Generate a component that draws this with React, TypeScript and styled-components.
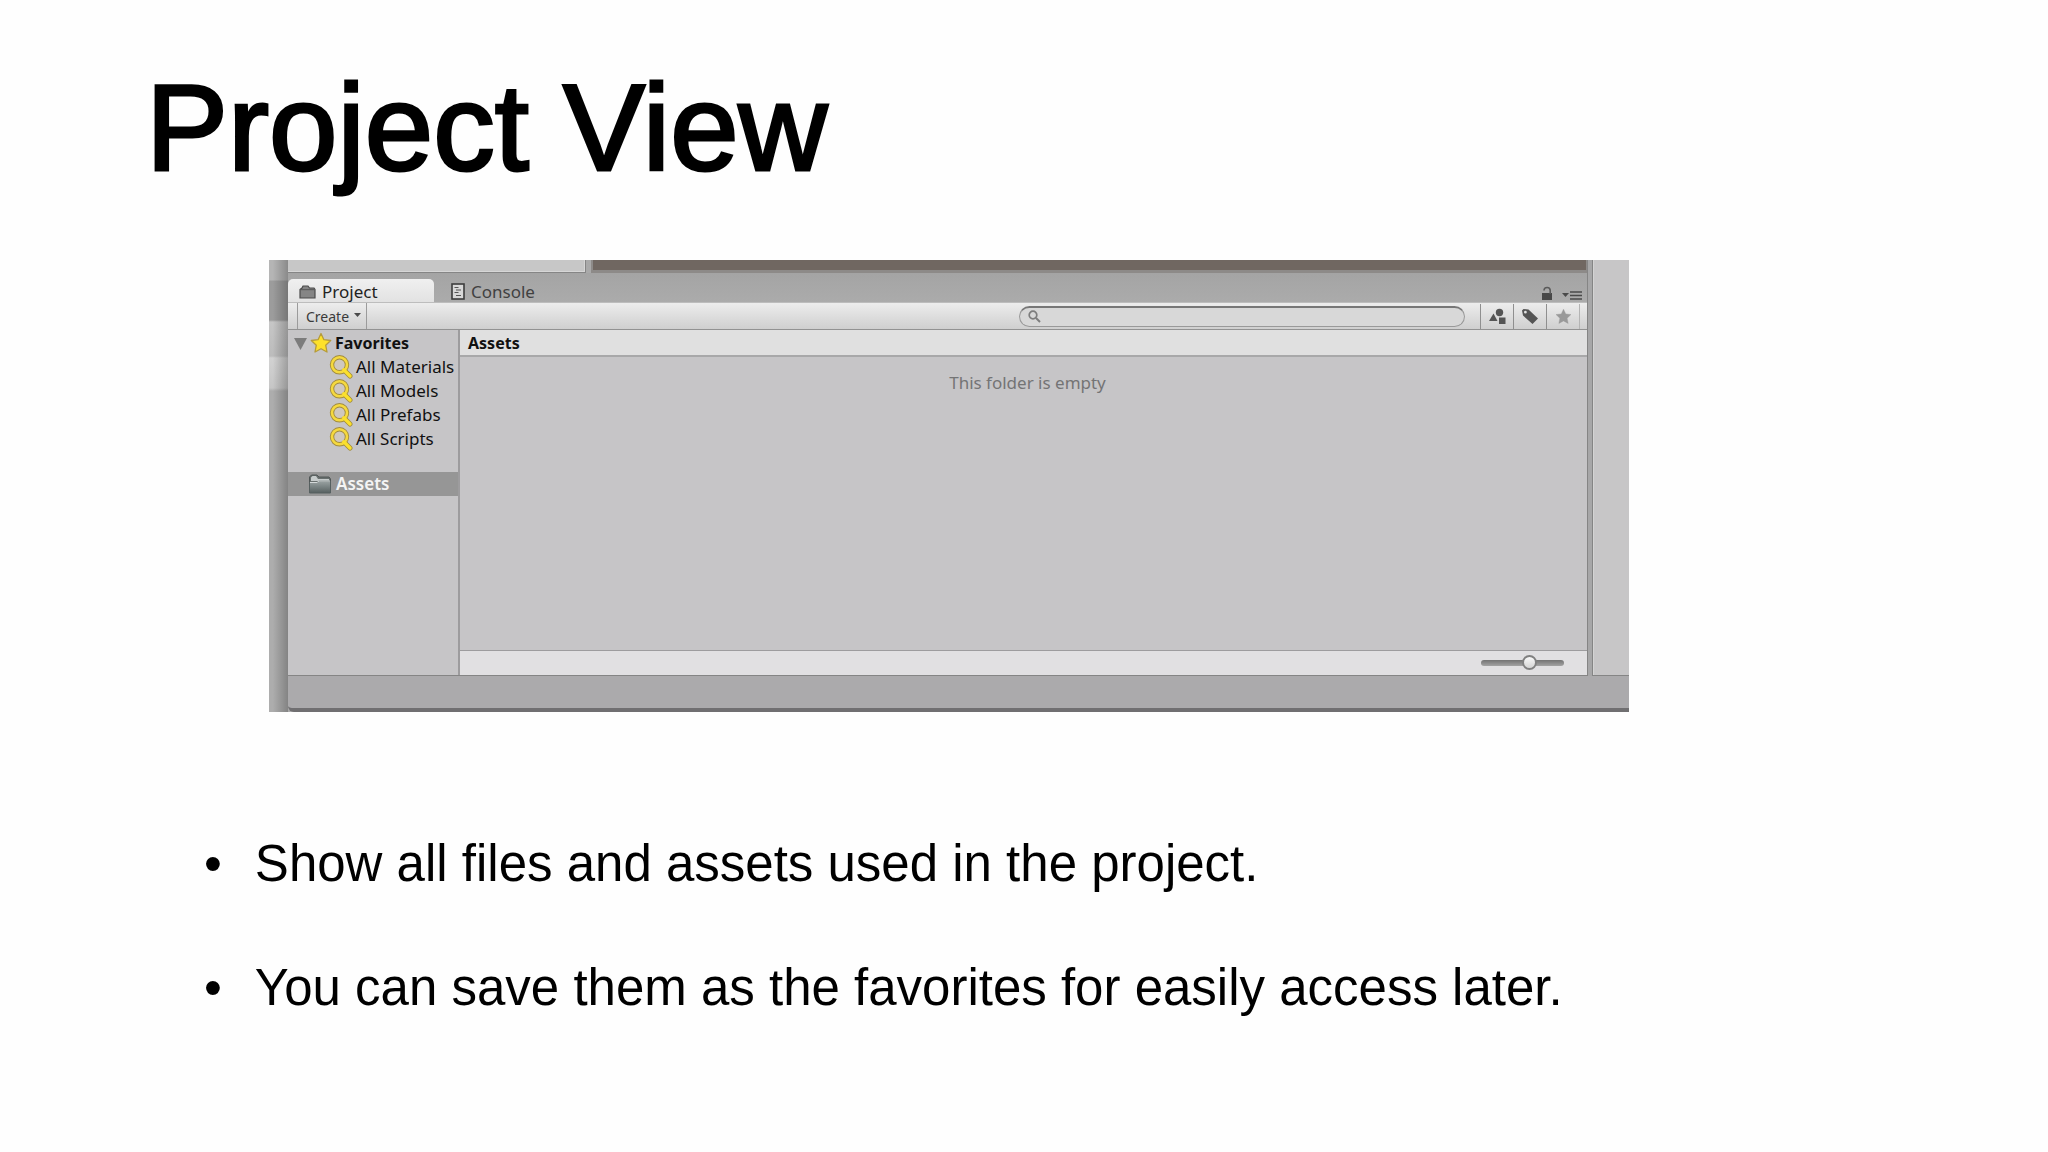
import React, { useState } from "react";
import styled, { createGlobalStyle } from "styled-components";

const GlobalStyle = createGlobalStyle`
  *, *::before, *::after { box-sizing: border-box; }
  body { margin: 0; background: #fefefe; color: #000; }
  button, input { font: inherit; color: inherit; }
`;

const sans = `"Helvetica Neue", "Liberation Sans", Arial, sans-serif`;
const ui = `"Lucida Grande", "Noto Sans", sans-serif`;

const Slide = styled.main`
  min-height: 100vh;
  padding: 60px 0 0;
  font-family: ${sans};
`;

const Title = styled.h1`
  margin: 0 146px;
  font-size: 123px;
  line-height: 136px;
  font-weight: 400;
  -webkit-text-stroke: 3px #000;
`;

const Frame = styled.section`
  display: flex;
  margin: 64px 419px 0 269px;
  background: #a9a9a9;
  font-family: ${ui};
  font-size: 17px;
  line-height: 24px;
`;

const Backdrop = styled.div`
  width: 19px;
  flex: none;
  background:
    linear-gradient(90deg, transparent 20%, rgba(0, 0, 0, 0.24)),
    linear-gradient(#b5b5b5 20px, #9c9c9c 21px, #9c9c9c 60px, #c6c6c6 62px, #bcbcbc 96px, #d2d2d2 98px, #c6c6c6 128px, #adadad 131px);
`;

const Window = styled.div`
  flex: 1;
  min-width: 0;
  display: flex;
  flex-direction: column;
`;

const WorkArea = styled.div`
  display: flex;
`;

const Dock = styled.div`
  flex: 1;
  min-width: 0;
  border-right: 1px solid #858585;
`;

const Gutter = styled.div`
  width: 4px;
  background: #a7a7a8;
`;

const SidePane = styled.div`
  width: 37px;
  background: #c7c6c7;
  border-left: 1px solid #858585;
  border-bottom: 1px solid #858585;
  box-shadow: inset 1px 0 #d4d4d4;
`;

const UpperPanes = styled.div`
  display: flex;
  gap: 5px;
  height: 13px;
`;

const HierarchyEdge = styled.div`
  width: 298px;
  background: #c7c7c7;
  border: solid #858585;
  border-width: 0 1px 1px 0;
  box-shadow: inset -1px -1px #d6d6d6;
`;

const SceneEdge = styled.div`
  flex: 1;
  background: #706761;
  border: solid #8d8a88;
  border-width: 0 1px 3px 2px;
`;

const TabBar = styled.div`
  display: flex;
  align-items: flex-end;
  height: 29px;
  background: linear-gradient(#a4a4a4, #ababab);
`;

const Tab = styled.button<{ $active?: boolean }>`
  display: flex;
  align-items: center;
  gap: 6px;
  height: 23px;
  width: ${(p) => (p.$active ? "146px" : "auto")};
  margin: 0 ${(p) => (p.$active ? "17px" : "0")} 0 0;
  padding: 2px 0 0 ${(p) => (p.$active ? "11px" : "0")};
  border: 0;
  border-radius: 5px 5px 0 0;
  background: ${(p) => (p.$active ? "linear-gradient(#f0f0f0, #e2e2e2)" : "none")};
  color: ${(p) => (p.$active ? "#222" : "#414141")};
`;

const TabTools = styled.div`
  display: flex;
  gap: 8px;
  margin-left: auto;
  padding: 0 4px 1px 0;
`;

const IconButton = styled.button`
  display: flex;
  padding: 0;
  border: 0;
  background: none;
`;

const Toolbar = styled.div`
  display: flex;
  align-items: center;
  height: 28px;
  padding: 0 7px 0 9px;
  background: linear-gradient(#ededed, #cfcfcf);
  border-top: 1px solid #bdbdbd;
  border-bottom: 1px solid #929292;
`;

const CreateButton = styled.button`
  display: flex;
  align-items: center;
  gap: 5px;
  height: 26px;
  padding: 1px 5px 0 8px;
  border: solid #9b9b9b;
  border-width: 0 1px;
  background: none;
  font-size: 14px;
  color: #3a3a3a;
`;

const SearchBox = styled.label`
  display: flex;
  align-items: center;
  gap: 6px;
  width: 446px;
  height: 21px;
  margin: 0 15px 0 auto;
  padding: 0 10px 0 8px;
  border: 1px solid #999;
  border-top: 2px solid #777;
  border-radius: 11px;
  background: #d8d8d8;
`;

const SearchInput = styled.input`
  flex: 1;
  min-width: 0;
  height: 16px;
  padding: 0;
  border: 0;
  outline: 0;
  background: none;
  font-size: 14px;
`;

const FilterGroup = styled.div`
  display: flex;
  border-right: 1px solid #b4b4b4;
`;

const FilterButton = styled.button`
  display: flex;
  align-items: center;
  justify-content: center;
  width: 33px;
  height: 25px;
  padding: 0;
  border: 0;
  border-left: 1px solid #8f8f8f;
  background: none;
`;

const Browser = styled.div`
  display: flex;
  background: #c6c5c7;
  border-bottom: 1px solid #858585;
`;

const Tree = styled.nav`
  width: 172px;
  flex: none;
  padding-top: 1px;
  border-right: 2px solid #9d9c9e;
`;

const TreeList = styled.ul`
  margin: 0;
  padding: 0 0 21px;
  list-style: none;
`;

const TreeRow = styled.button<{ $kind: "group" | "item" | "root" }>`
  display: flex;
  align-items: center;
  gap: ${(p) => (p.$kind === "root" ? "4px" : "3px")};
  width: 100%;
  height: 24px;
  padding: 0 0 0 ${(p) => ({ group: "6px", item: "41px", root: "20px" })[p.$kind]};
  border: 0;
  background: ${(p) => (p.$kind === "root" ? "#969696" : "none")};
  color: ${(p) => (p.$kind === "root" ? "#f4f4f4" : "#111")};
  font-size: ${(p) => (p.$kind === "group" ? "16px" : "17px")};
  font-weight: ${(p) => ({ group: 700, item: 400, root: 600 })[p.$kind]};
  white-space: nowrap;
`;

const Content = styled.div`
  flex: 1;
  min-width: 0;
  display: flex;
  flex-direction: column;
`;

const ContentHeader = styled.h2`
  margin: 0;
  padding: 0 8px;
  height: 27px;
  font-size: 16px;
  line-height: 26px;
  font-weight: 700;
  color: #111;
  background: #e0e0e0;
  border-bottom: 2px solid #a8a8a9;
`;

const EmptyNote = styled.p`
  margin: 0;
  min-height: 293px;
  padding: 14px 0 0 8px;
  text-align: center;
  color: #747475;
`;

const ContentFooter = styled.div`
  display: flex;
  align-items: center;
  justify-content: flex-end;
  height: 25px;
  padding-right: 23px;
  background: #e1e0e2;
  border-top: 1px solid #9d9c9e;
`;

const ZoomSlider = styled.input`
  appearance: none;
  width: 83px;
  height: 16px;
  margin: 0;
  background: none;
  &::-webkit-slider-runnable-track {
    height: 6px;
    border-radius: 3px;
    background: linear-gradient(#737373, #a3a3a3);
  }
  &::-webkit-slider-thumb {
    appearance: none;
    width: 15px;
    height: 15px;
    margin-top: -5px;
    border: 2px solid #808080;
    border-radius: 50%;
    background: linear-gradient(#fafafa, #d4d4d4);
  }
`;

const StatusBar = styled.div`
  height: 36px;
  background: #abaaac;
  border-bottom: 4px solid #706f71;
  border-bottom-left-radius: 6px;
`;

const Points = styled.ul`
  margin: 120px 144px 0 204px;
  padding: 0;
  list-style: none;
  font-size: 51px;
  line-height: 64px;
`;

const Point = styled.li`
  display: flex;
  gap: 33px;
  margin-bottom: 60px;
  &::before { content: "•"; }
`;

const FolderTabIcon = () => (
  <svg width="17" height="14" viewBox="0 0 17 14" aria-hidden="true">
    <path d="M1 4.500 3 3 4 1h5l1.500 2H15l1 1.500V13H1Z" fill="#858585" stroke="#4b4b4b" strokeWidth="1.200" />
    <path d="M2 4.700h13" stroke="#565656" />
  </svg>
);

const ConsoleIcon = () => (
  <svg width="14" height="17" viewBox="0 0 14 17" aria-hidden="true">
    <rect x="1" y="1" width="12" height="15" fill="#d8d8d8" stroke="#3d3d3d" strokeWidth="1.600" />
    <path d="M3.500 4.500h4M5 7h5M3.500 9.500h4M5 12.500h5" stroke="#555" strokeWidth="1.200" />
  </svg>
);

const LockIcon = () => (
  <svg width="12" height="15" viewBox="0 0 12 15" aria-hidden="true">
    <rect x="1" y="7" width="10" height="7" fill="#484848" />
    <path d="M3 4.500C3 .5 9.200.5 9.200 4.500V8" fill="none" stroke="#5a5a5a" strokeWidth="1.600" />
  </svg>
);

const MenuIcon = () => (
  <svg width="22" height="15" viewBox="0 0 22 15" aria-hidden="true">
    <path d="M1 7h7L4.500 11Z" fill="#4a4a4a" />
    <path d="M9 6h12M9 9.500h12M9 13h12" stroke="#4a4a4a" strokeWidth="1.700" />
  </svg>
);

const CaretIcon = () => (
  <svg width="7" height="10" viewBox="0 0 7 10" aria-hidden="true">
    <path d="M0 1h7L3.500 5Z" fill="#4a4a4a" />
  </svg>
);

const SearchIcon = () => (
  <svg width="13" height="13" viewBox="0 0 13 13" aria-hidden="true">
    <circle cx="5" cy="5" r="3.800" fill="none" stroke="#7d7d7d" strokeWidth="1.700" />
    <path d="m8 8 4 4" stroke="#7d7d7d" strokeWidth="2" />
  </svg>
);

const ShapesIcon = () => (
  <svg width="17" height="17" viewBox="0 0 17 17" aria-hidden="true">
    <path d="M0 13 4.500 5.500 8.500 13Z" fill="#555" />
    <circle cx="10.500" cy="4.500" r="3.700" fill="#555" />
    <rect x="10" y="9.500" width="6.500" height="6.500" fill="#555" />
  </svg>
);

const TagIcon = () => (
  <svg width="18" height="17" viewBox="0 0 18 17" aria-hidden="true">
    <path fillRule="evenodd" d="M1 2.500 2.500 1l5 .5L17 10.500 11.500 16 2 7.500ZM3 4.200a1.400 1.400 0 1 0 2.800 0 1.400 1.400 0 0 0-2.800 0Z" fill="#555" />
  </svg>
);

const StarIcon = ({ size, gold }: { size: number; gold?: boolean }) => (
  <svg width={size} height={size} viewBox="0 0 22 22" aria-hidden="true">
    <path
      d="m11 1.500 2.900 6.200 6.800.8-5 4.700 1.300 6.800L11 16.700 5 20l1.300-6.800-5-4.700 6.800-.8Z"
      fill={gold ? "#fde12a" : "#999"}
      stroke={gold ? "#b59b3a" : "#999"}
      strokeWidth={gold ? 1.3 : 0.5}
      strokeLinejoin="round"
    />
  </svg>
);

const TriangleIcon = () => (
  <svg width="13" height="13" viewBox="0 0 13 13" aria-hidden="true">
    <path d="M0 1h13L6.500 13Z" fill="#7c7c7c" />
  </svg>
);

const GoldSearchIcon = () => (
  <svg width="24" height="24" viewBox="0 0 24 24" aria-hidden="true">
    <path d="m15.500 15.500 5.500 5.500" stroke="#a18b3c" strokeWidth="5" strokeLinecap="round" />
    <circle cx="10.500" cy="9.800" r="7.500" fill="#cfc8c0" stroke="#a18b3c" strokeWidth="4.400" />
    <circle cx="10.500" cy="9.800" r="7.500" fill="none" stroke="#f5d93f" strokeWidth="2.600" />
    <path d="m14.800 14.800 6.200 6.200" stroke="#fbe02c" strokeWidth="3.400" strokeLinecap="round" />
  </svg>
);

const FolderIcon = () => (
  <svg width="24" height="20" viewBox="0 0 24 20" aria-hidden="true">
    <defs>
      <linearGradient id="folder" x2="0" y2="1">
        <stop stopColor="#9aa3a3" />
        <stop offset="1" stopColor="#566060" />
      </linearGradient>
    </defs>
    <path d="M1.500 18V3l2-2H9l2 2h10l1.500 2v13Z" fill="#69706f" stroke="#505656" />
    <path d="M3 6V3.500L4.500 2H8l2 3h11v2H3Z" fill="#c6cbcb" />
    <path d="M1.500 8.500H9L11 7h11.500v12h-21Z" fill="url(#folder)" stroke="#566060" />
    <path d="M2 8.500h7L11 7h11" fill="none" stroke="#d3d8d8" />
  </svg>
);

const searches = ["All Materials", "All Models", "All Prefabs", "All Scripts"];
const points = [
  "Show all files and assets used in the project.",
  "You can save them as the favorites for easily access later.",
];

export default function App() {
  const [query, setQuery] = useState("");
  const [zoom, setZoom] = useState(60);

  return (
    <Slide>
      <GlobalStyle />
      <Title>Project View</Title>
      <Frame aria-label="Project window">
        <Backdrop />
        <Window>
          <WorkArea>
            <Dock>
              <UpperPanes>
                <HierarchyEdge />
                <SceneEdge />
              </UpperPanes>
              <TabBar>
                <Tab $active type="button"><FolderTabIcon />Project</Tab>
                <Tab type="button"><ConsoleIcon />Console</Tab>
                <TabTools>
                  <IconButton type="button" aria-label="Lock"><LockIcon /></IconButton>
                  <IconButton type="button" aria-label="Menu"><MenuIcon /></IconButton>
                </TabTools>
              </TabBar>
              <Toolbar>
                <CreateButton type="button">Create<CaretIcon /></CreateButton>
                <SearchBox>
                  <SearchIcon />
                  <SearchInput aria-label="Search" value={query} onChange={(e) => setQuery(e.target.value)} />
                </SearchBox>
                <FilterGroup>
                  <FilterButton type="button" aria-label="Search by type"><ShapesIcon /></FilterButton>
                  <FilterButton type="button" aria-label="Search by label"><TagIcon /></FilterButton>
                  <FilterButton type="button" aria-label="Save search"><StarIcon size={17} /></FilterButton>
                </FilterGroup>
              </Toolbar>
              <Browser>
                <Tree>
                  <TreeRow $kind="group" type="button"><TriangleIcon /><StarIcon size={22} gold />Favorites</TreeRow>
                  <TreeList>
                    {searches.map((name) => (
                      <li key={name}>
                        <TreeRow $kind="item" type="button"><GoldSearchIcon />{name}</TreeRow>
                      </li>
                    ))}
                  </TreeList>
                  <TreeRow $kind="root" type="button"><FolderIcon />Assets</TreeRow>
                </Tree>
                <Content>
                  <ContentHeader>Assets</ContentHeader>
                  <EmptyNote>This folder is empty</EmptyNote>
                  <ContentFooter>
                    <ZoomSlider
                      type="range"
                      aria-label="Icon size"
                      value={zoom}
                      onChange={(e) => setZoom(Number(e.target.value))}
                    />
                  </ContentFooter>
                </Content>
              </Browser>
            </Dock>
            <Gutter />
            <SidePane />
          </WorkArea>
          <StatusBar />
        </Window>
      </Frame>
      <Points>
        {points.map((text) => (
          <Point key={text}>{text}</Point>
        ))}
      </Points>
    </Slide>
  );
}
